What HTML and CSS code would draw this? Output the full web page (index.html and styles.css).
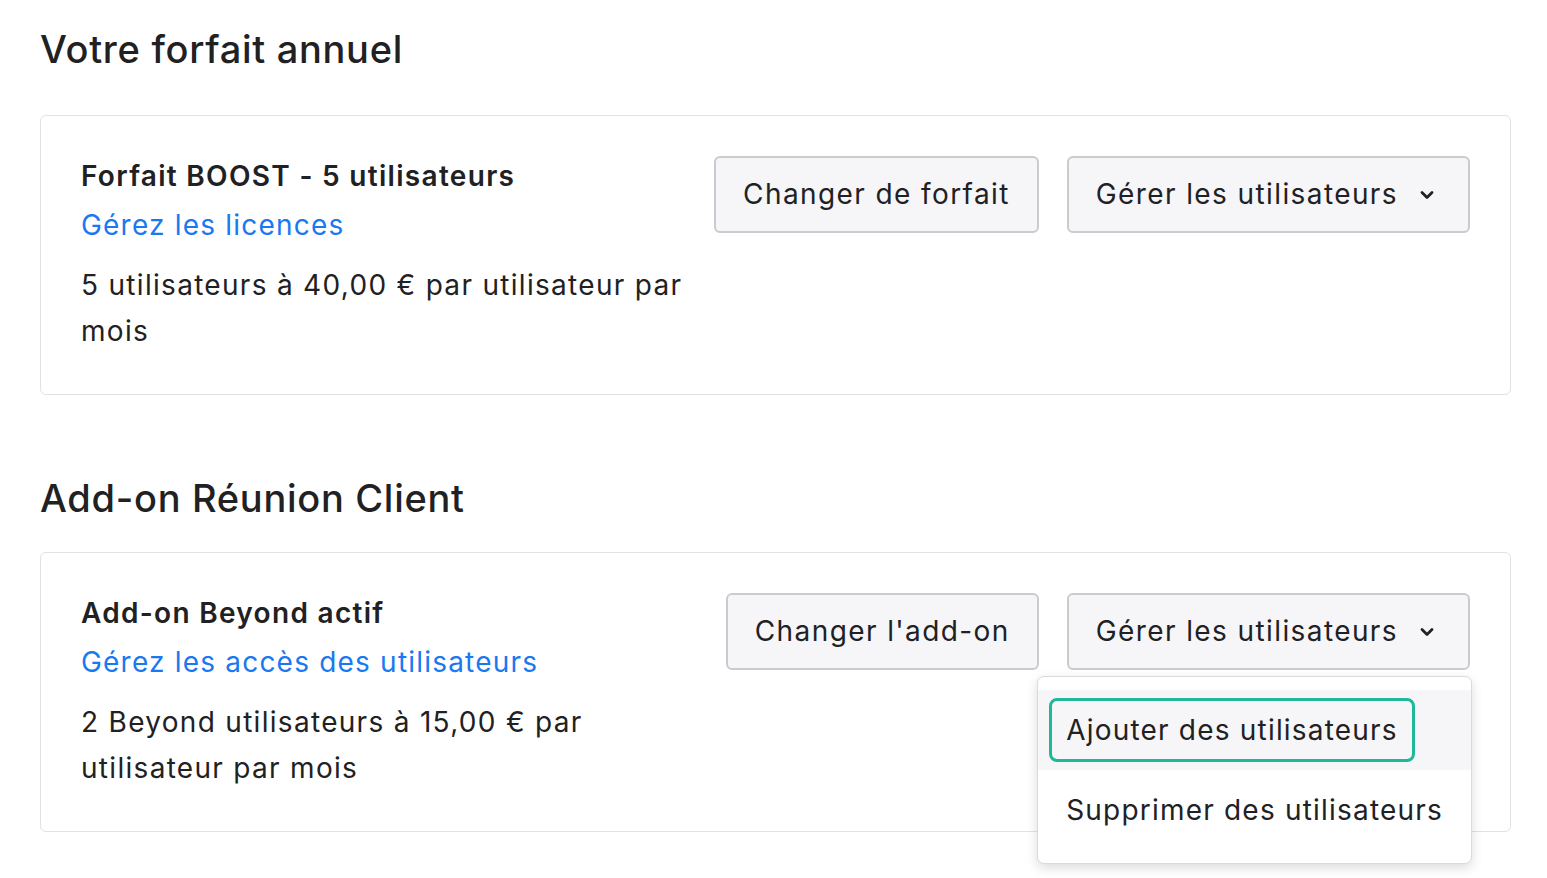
FILE: index.html
```html
<!DOCTYPE html>
<html lang="fr">
<head>
  <meta charset="UTF-8">
  <title>Votre forfait annuel</title>
  <link rel="stylesheet" href="styles.css">
</head>
<body>
  <h1 class="section-title">Votre forfait annuel</h1>
  <div class="plan-card">
    <div class="plan-info">
      <h2 class="plan-name">Forfait BOOST - 5 utilisateurs</h2>
      <a class="plan-link" href="#">Gérez les licences</a>
      <p class="plan-price">5 utilisateurs à 40,00 € par utilisateur par mois</p>
    </div>
    <div class="plan-actions">
      <button class="btn">Changer de forfait</button>
      <div class="menu-wrap">
        <button class="btn btn-menu">Gérer les utilisateurs
          <svg class="chevron" width="20" height="20" viewBox="0 0 20 20"><polyline points="5,7.5 10,12.5 15,7.5" fill="none" stroke="#222" stroke-width="2.8" stroke-linecap="round" stroke-linejoin="round"/></svg>
        </button>
      </div>
    </div>
  </div>

  <h1 class="section-title second">Add-on Réunion Client</h1>
  <div class="plan-card addon">
    <div class="plan-info">
      <h2 class="plan-name">Add-on Beyond actif</h2>
      <a class="plan-link" href="#">Gérez les accès des utilisateurs</a>
      <p class="plan-price">2 Beyond utilisateurs à 15,00 € par utilisateur par mois</p>
    </div>
    <div class="plan-actions">
      <button class="btn">Changer l'add-on</button>
      <div class="menu-wrap">
        <button class="btn btn-menu">Gérer les utilisateurs
          <svg class="chevron" width="20" height="20" viewBox="0 0 20 20"><polyline points="5,7.5 10,12.5 15,7.5" fill="none" stroke="#222" stroke-width="2.8" stroke-linecap="round" stroke-linejoin="round"/></svg>
        </button>
        <ul class="menu">
          <li class="menu-item active"><span class="menu-label focused">Ajouter des utilisateurs</span></li>
          <li class="menu-item"><span class="menu-label">Supprimer des utilisateurs</span></li>
        </ul>
      </div>
    </div>
  </div>
</body>
</html>
```

FILE: styles.css
```css
html, body { height: 100%; }
body { box-sizing: border-box; margin: 0; padding: 26px 36px 0 40px; background: #fff; color: #212124; font-family: Inter, "Noto Sans", sans-serif; }
.section-title { margin: 0; font-size: 38px; line-height: 46px; font-weight: 500; letter-spacing: 0.7px; }
.section-title.second { margin-top: 80px; }
.plan-card { display: flex; gap: 26px; margin-top: 43px; padding: 40px; border: 1px solid #e2e2e4; border-radius: 6px; }
.addon { margin-top: 31px; }
.plan-info { flex: 1; min-width: 0; }
.plan-name { margin: 0; font-size: 28px; line-height: 40px; font-weight: 600; letter-spacing: 1.3px; }
.plan-link { display: block; margin-top: 9px; font-size: 28px; line-height: 40px; letter-spacing: 1.2px; color: #1a78f0; text-decoration: none; }
.plan-price { margin: 17px 0 0; font-size: 28px; line-height: 46px; letter-spacing: 1.3px; }
.plan-actions { display: flex; gap: 28px; align-items: flex-start; }
.menu-wrap { position: relative; }
.btn { display: flex; align-items: center; gap: 19px; padding: 16px 27px; border: 2px solid #cbcbcf; border-radius: 6px; background: #f6f6f8; color: #212124; font-family: inherit; font-size: 28px; line-height: 41px; letter-spacing: 1.4px; white-space: nowrap; cursor: pointer; }
.btn-menu { padding-right: 31px; }
.chevron { flex: none; }
.menu { position: absolute; z-index: 2; top: calc(100% + 6px); right: -2px; margin: 0; padding: 13px 0; list-style: none; background: #fff; border: 1px solid #dadadd; border-radius: 7px; box-shadow: 0 4px 12px rgba(0, 0, 0, 0.14); white-space: nowrap; }
.menu-item { padding: 8px 11px; font-size: 28px; line-height: 40px; letter-spacing: 1.2px; }
.menu-item.active { background: #f6f6f8; }
.menu-label { display: inline-block; padding: 9px 14px; border: 3px solid transparent; border-radius: 8px; }
.menu-label.focused { border-color: #1fb898; }
```
